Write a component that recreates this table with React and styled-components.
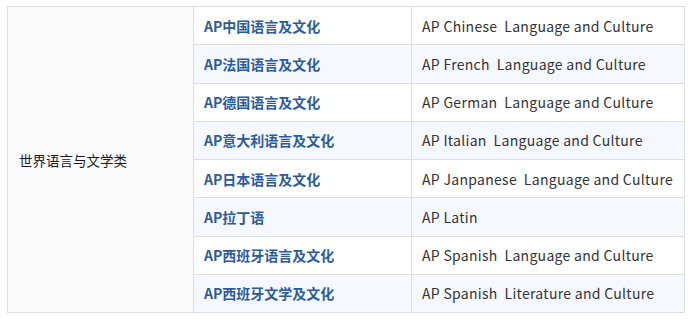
import React from 'react';
import styled, { createGlobalStyle } from 'styled-components';

const GlobalStyle = createGlobalStyle`
  body {
    margin: 0;
    background: #ffffff;
    font-family: "Noto Sans CJK SC", "Noto Sans", sans-serif;
  }
`;

const Page = styled.div`
  padding: 6px 7px;
`;

const Table = styled.table`
  width: 677px;
  border-collapse: collapse;
  table-layout: fixed;
  font-size: 14px;
`;

const Row = styled.tr`
  height: 38.25px;
  background: ${(p) => (p.$alt ? '#f5f9ff' : '#ffffff')};
`;

const Cell = styled.td`
  border: 1px solid #dddddd;
  padding: 0 10px;
  color: #222222;
  white-space: nowrap;
`;

const GroupCell = styled(Cell)`
  background: #fafafa;
  padding-left: 11px;
  font-size: 13.5px;
  color: #1a1a1a;
`;

const NameCell = styled(Cell)`
  color: #2b5b9e;
  font-weight: 700;
`;

const EnCell = styled(Cell)`
  color: #333333;
  white-space: pre;
  letter-spacing: 0.3px;
`;

const courses = [
  ['AP中国语言及文化', 'AP Chinese  Language and Culture'],
  ['AP法国语言及文化', 'AP French  Language and Culture'],
  ['AP德国语言及文化', 'AP German  Language and Culture'],
  ['AP意大利语言及文化', 'AP Italian  Language and Culture'],
  ['AP日本语言及文化', 'AP Janpanese  Language and Culture'],
  ['AP拉丁语', 'AP Latin'],
  ['AP西班牙语言及文化', 'AP Spanish  Language and Culture'],
  ['AP西班牙文学及文化', 'AP Spanish  Literature and Culture'],
];

const App = () => {
  return (
    <Page>
      <GlobalStyle />
      <Table>
        <colgroup>
          <col style={{ width: 186 }} />
          <col style={{ width: 218 }} />
          <col style={{ width: 273 }} />
        </colgroup>
        <tbody>
          {courses.map(([cn, en], i) => (
            <Row key={cn} $alt={i % 2 === 1}>
              {i === 0 && <GroupCell rowSpan={courses.length}>世界语言与文学类</GroupCell>}
              <NameCell>{cn}</NameCell>
              <EnCell>{en}</EnCell>
            </Row>
          ))}
        </tbody>
      </Table>
    </Page>
  );
};

export default App;
